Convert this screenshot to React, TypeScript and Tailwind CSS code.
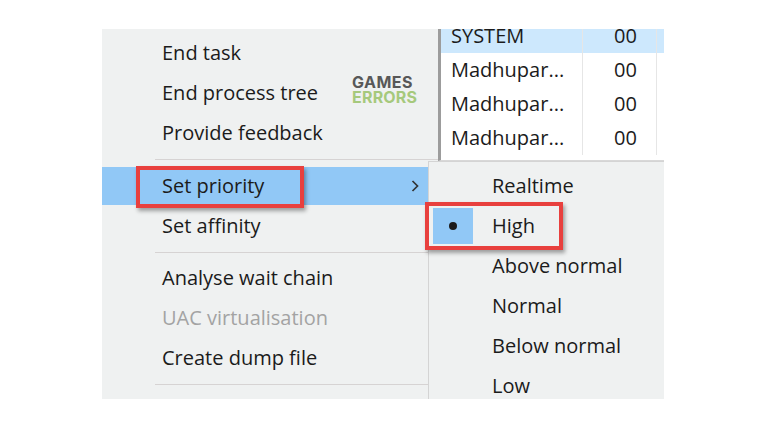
import React from "react";

const font = { fontFamily: '"Open Sans", "Noto Sans", Arial, sans-serif' };

function Item({ label, disabled = false, active = false, chevron = false }: { label: string; disabled?: boolean; active?: boolean; chevron?: boolean }) {
  return (
    <div className="h-[40px] flex items-stretch">
      <div className={`flex-1 flex items-center pl-[60px] pr-[14px] ${active ? "bg-[#91c8f6] my-[1px]" : ""}`}>
        <span className={`flex-1 text-[20px] font-medium leading-none ${disabled ? "text-[#a3a3a3]" : "text-[#1b1b1b]"}`}>{label}</span>
        {chevron && (
          <svg width="8" height="12" viewBox="0 0 8 12" className="mr-[5px]">
            <polyline points="1.5,1 6.5,6 1.5,11" fill="none" stroke="#333" strokeWidth="1.7" />
          </svg>
        )}
      </div>
    </div>
  );
}

function Sep({ h }: { h: number }) {
  return (
    <div className={`flex items-center pl-[53px] ${h === 13 ? "h-[13px]" : "h-[12px]"}`}>
      <div className="h-[1px] w-full bg-[#d6d3d3]" />
    </div>
  );
}

function SubItem({ label, checked = false }: { label: string; checked?: boolean }) {
  return (
    <div className="h-[40px] flex items-center relative">
      {checked && (
        <div className="absolute left-[4px] top-[2px] w-[40px] h-[36px] bg-[#91c8f6] flex items-center justify-center">
          <div className="w-[8px] h-[8px] rounded-full bg-[#1b1b1b]" />
        </div>
      )}
      <span className="pl-[63px] text-[20px] font-medium leading-none text-[#1b1b1b]">{label}</span>
    </div>
  );
}

function Row({ name, sel = false }: { name: string; sel?: boolean }) {
  return (
    <div className={`h-[34px] flex items-center ${sel ? "bg-[#cde8fd]" : "bg-white"}`}>
      <div className="w-[142px] h-full flex items-center pl-[10px] border-r border-[#e6e6e6] text-[20px] font-medium leading-none text-[#1b1b1b]">{name}</div>
      <div className="w-[74px] h-full flex items-center pl-[31px] border-r border-[#e6e6e6] text-[20px] font-medium leading-none text-[#1b1b1b]">00</div>
      <div className="flex-1" />
    </div>
  );
}

export default function App() {
  return (
    <div className="w-[768px] h-[427px] bg-white pt-[29px] pl-[102px]" style={font}>
      <div className="relative w-[562px] h-[370px] overflow-hidden flex">
        <div className="w-[336px] h-full bg-[#eff1f1] pt-[4px] flex flex-col">
          <Item label="End task" />
          <Item label="End process tree" />
          <Item label="Provide feedback" />
          <Sep h={13} />
          <Item label="Set priority" active chevron />
          <Item label="Set affinity" />
          <Sep h={12} />
          <Item label="Analyse wait chain" />
          <Item label="UAC virtualisation" disabled />
          <Item label="Create dump file" />
          <Sep h={12} />
        </div>
        <div className="w-[226px] h-full flex flex-col">
          <div className="h-[132px] border-l-[3px] border-[#9c9c9c] border-b border-b-[#d8d8d8] bg-white overflow-hidden">
            <div className="-mt-[10px]">
              <Row name="SYSTEM" sel />
              <Row name="Madhupar..." />
              <Row name="Madhupar..." />
              <Row name="Madhupar..." />
            </div>
          </div>
          <div className="flex-1 bg-[#eff1f1]" />
        </div>

        <div className="absolute left-[326px] top-[132px] w-[240px] h-[250px] bg-[#eff1f1] border-l border-t border-[#d4d4d4] pt-[4px]">
          <SubItem label="Realtime" />
          <SubItem label="High" checked />
          <SubItem label="Above normal" />
          <SubItem label="Normal" />
          <SubItem label="Below normal" />
          <SubItem label="Low" />
        </div>

        <div className="absolute left-[250px] top-[46px] flex flex-col font-bold" style={{ fontFamily: 'Inter, "Open Sans", sans-serif' }}>
          <span className="block text-[16px] leading-[15px] text-[#585858] tracking-[0.5px]">GAMES</span>
          <span className="block text-[16px] leading-[15px] text-[#a6c97c] tracking-[0.2px]">ERRORS</span>
        </div>

        <div className="absolute left-[34px] top-[137px] w-[168px] h-[42px] border-[4px] border-[#e8403e] shadow-[2px_3px_4px_rgba(0,0,0,0.35)]" />
        <div className="absolute left-[323px] top-[173px] w-[138px] h-[48px] border-[4px] border-[#e8403e] shadow-[2px_3px_4px_rgba(0,0,0,0.35)]" />
      </div>
    </div>
  );
}
